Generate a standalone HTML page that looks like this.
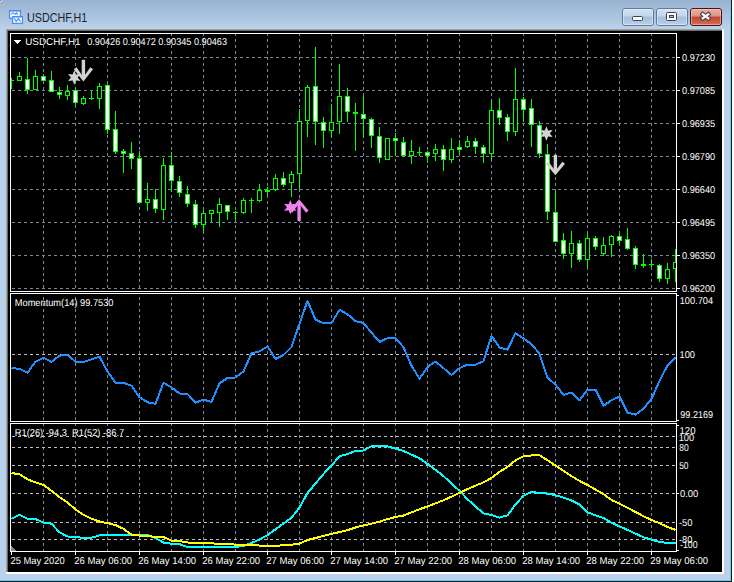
<!DOCTYPE html>
<html><head><meta charset="utf-8">
<style>
html,body{margin:0;padding:0;background:#fff;}
#win{position:absolute;left:0;top:0;width:732px;height:582px;overflow:hidden;
 background:linear-gradient(to bottom,#97b2d0 0px,#a8c1dc 14px,#b9d1ea 28px,#b9d1ea 100%);}
.edge{position:absolute;}
#title{position:absolute;left:26.5px;top:11px;font:12.5px "Liberation Sans",sans-serif;color:#1c1c30;transform:scaleX(0.86);transform-origin:0 0;white-space:nowrap}
.btn{position:absolute;top:8px;height:16px;border:1px solid #6a84a4;border-radius:3px;box-sizing:content-box;
 background:linear-gradient(to bottom,#dbe7f4 0,#c9daee 50%,#a9c1dc 52%,#b9cfe6 100%);}
#bclose{border-color:#5a1e1e;background:linear-gradient(to bottom,#eaa999 0,#dd8c78 50%,#c2462a 52%,#cf6a48 100%);}
</style></head><body>
<div id="win">
 <div class="edge" style="left:0;top:0;width:1px;height:1px;background:#6e6e6e"></div>
 <div class="edge" style="left:1px;top:0;width:1px;height:1px;background:#ececec"></div>
 <div class="edge" style="left:0;top:1px;width:1px;height:1px;background:#ececec"></div>
 <div class="edge" style="left:730px;top:0;width:1px;height:581px;background:#5ad2f5"></div>
 <div class="edge" style="left:731px;top:0;width:1px;height:582px;background:#1a1a1a"></div>
 <div class="edge" style="left:0;top:580px;width:731px;height:1px;background:#5ad2f5"></div>
 <div class="edge" style="left:0;top:581px;width:732px;height:1px;background:#1a1a1a"></div>
 <svg width="16" height="16" viewBox="0 0 16 16" style="position:absolute;left:8px;top:9px"><rect x="1.6" y="1.6" width="10.8" height="7.8" fill="#fff" stroke="#4a8cf0" stroke-width="1.3"/><rect x="1" y="1" width="12" height="1.4" fill="#4a8cf0"/><path d="M3.2 5.4 L5 3.6 L7.2 5.2 L8.6 3.8 L9.6 6" fill="none" stroke="#4a8cf0" stroke-width="1.1"/><rect x="4.6" y="7.6" width="9.8" height="6.8" fill="#fff" stroke="#4a8cf0" stroke-width="1.3"/><rect x="4" y="7" width="11" height="1.4" fill="#4a8cf0"/><path d="M6.2 9.4 L8.3 12.6 L10.4 9.4 L12.4 12.6" fill="none" stroke="#4a8cf0" stroke-width="1.1"/></svg>
 <div id="title">USDCHF,H1</div>
 <svg width="104" height="22" style="position:absolute;left:620px;top:6px" viewBox="0 0 104 22">
  <defs>
   <linearGradient id="gb" x1="0" y1="0" x2="0" y2="1"><stop offset="0" stop-color="#d5e3f2"/><stop offset="0.45" stop-color="#c2d5eb"/><stop offset="0.5" stop-color="#a5bedb"/><stop offset="1" stop-color="#bcd0e8"/></linearGradient>
   <linearGradient id="gr" x1="0" y1="0" x2="0" y2="1"><stop offset="0" stop-color="#eeb0a2"/><stop offset="0.45" stop-color="#de9482"/><stop offset="0.5" stop-color="#c0442a"/><stop offset="1" stop-color="#d4735a"/></linearGradient>
  </defs>
  <rect x="2.5" y="2.5" width="31" height="17" rx="2.5" fill="url(#gb)" stroke="#5f7a99"/>
  <rect x="3.5" y="3.5" width="29" height="15" rx="1.5" fill="none" stroke="#e8f0f9" stroke-opacity="0.6"/>
  <rect x="12.5" y="10.5" width="10" height="4" rx="1" fill="#fafafa" stroke="#3d4352"/>
  <rect x="36.5" y="2.5" width="31" height="17" rx="2.5" fill="url(#gb)" stroke="#5f7a99"/>
  <rect x="37.5" y="3.5" width="29" height="15" rx="1.5" fill="none" stroke="#e8f0f9" stroke-opacity="0.6"/>
  <rect x="46.5" y="6.5" width="10" height="8" rx="1" fill="#fafafa" stroke="#3d4352"/>
  <rect x="49.5" y="9.5" width="4" height="2" fill="#a8bede" stroke="#3d4352"/>
  <rect x="70.5" y="2.5" width="31" height="17" rx="2.5" fill="url(#gr)" stroke="#4a1414"/>
  <rect x="71.5" y="3.5" width="29" height="15" rx="1.5" fill="none" stroke="#f6d0c6" stroke-opacity="0.5"/>
  <path d="M82.7 8.3 L88.3 12.3 M88.3 8.3 L82.7 12.3" stroke="#3a3c48" stroke-width="4.3" stroke-linecap="square"/>
  <path d="M82.7 8.3 L88.3 12.3 M88.3 8.3 L82.7 12.3" stroke="#fafafa" stroke-width="2.3" stroke-linecap="square"/>
 </svg>
 <div class="edge" style="left:6px;top:29px;width:718px;height:1px;background:#a0a0a0"></div>
 <div class="edge" style="left:6px;top:29px;width:1px;height:545px;background:#a0a0a0"></div>
 <div class="edge" style="left:7px;top:30px;width:716px;height:1px;background:#696969"></div>
 <div class="edge" style="left:7px;top:30px;width:1px;height:543px;background:#696969"></div>
 <div class="edge" style="left:722px;top:29px;width:2px;height:545px;background:#fff"></div>
 <div class="edge" style="left:6px;top:572px;width:718px;height:2px;background:#fff"></div>
 <div class="edge" style="left:8px;top:31px;width:714px;height:541px;background:#000"></div>
</div>
<svg width="734" height="582" viewBox="0 0 734 582" style="position:absolute;left:0;top:0" shape-rendering="crispEdges"><defs><clipPath id="cm"><rect x="11" y="34" width="665" height="257"/></clipPath><clipPath id="cmo"><rect x="11" y="294" width="665" height="127"/></clipPath><clipPath id="crs"><rect x="11" y="424" width="665" height="127"/></clipPath></defs><line x1="43.5" y1="34" x2="43.5" y2="291" stroke="#778899" stroke-dasharray="3 3" stroke-dashoffset="1"/><line x1="75.5" y1="34" x2="75.5" y2="291" stroke="#778899" stroke-dasharray="3 3" stroke-dashoffset="1"/><line x1="107.5" y1="34" x2="107.5" y2="291" stroke="#778899" stroke-dasharray="3 3" stroke-dashoffset="1"/><line x1="139.5" y1="34" x2="139.5" y2="291" stroke="#778899" stroke-dasharray="3 3" stroke-dashoffset="1"/><line x1="171.5" y1="34" x2="171.5" y2="291" stroke="#778899" stroke-dasharray="3 3" stroke-dashoffset="1"/><line x1="203.5" y1="34" x2="203.5" y2="291" stroke="#778899" stroke-dasharray="3 3" stroke-dashoffset="1"/><line x1="235.5" y1="34" x2="235.5" y2="291" stroke="#778899" stroke-dasharray="3 3" stroke-dashoffset="1"/><line x1="267.5" y1="34" x2="267.5" y2="291" stroke="#778899" stroke-dasharray="3 3" stroke-dashoffset="1"/><line x1="299.5" y1="34" x2="299.5" y2="291" stroke="#778899" stroke-dasharray="3 3" stroke-dashoffset="1"/><line x1="331.5" y1="34" x2="331.5" y2="291" stroke="#778899" stroke-dasharray="3 3" stroke-dashoffset="1"/><line x1="363.5" y1="34" x2="363.5" y2="291" stroke="#778899" stroke-dasharray="3 3" stroke-dashoffset="1"/><line x1="395.5" y1="34" x2="395.5" y2="291" stroke="#778899" stroke-dasharray="3 3" stroke-dashoffset="1"/><line x1="427.5" y1="34" x2="427.5" y2="291" stroke="#778899" stroke-dasharray="3 3" stroke-dashoffset="1"/><line x1="459.5" y1="34" x2="459.5" y2="291" stroke="#778899" stroke-dasharray="3 3" stroke-dashoffset="1"/><line x1="491.5" y1="34" x2="491.5" y2="291" stroke="#778899" stroke-dasharray="3 3" stroke-dashoffset="1"/><line x1="523.5" y1="34" x2="523.5" y2="291" stroke="#778899" stroke-dasharray="3 3" stroke-dashoffset="1"/><line x1="555.5" y1="34" x2="555.5" y2="291" stroke="#778899" stroke-dasharray="3 3" stroke-dashoffset="1"/><line x1="587.5" y1="34" x2="587.5" y2="291" stroke="#778899" stroke-dasharray="3 3" stroke-dashoffset="1"/><line x1="619.5" y1="34" x2="619.5" y2="291" stroke="#778899" stroke-dasharray="3 3" stroke-dashoffset="1"/><line x1="651.5" y1="34" x2="651.5" y2="291" stroke="#778899" stroke-dasharray="3 3" stroke-dashoffset="1"/><line x1="43.5" y1="294" x2="43.5" y2="421" stroke="#778899" stroke-dasharray="3 3" stroke-dashoffset="3"/><line x1="75.5" y1="294" x2="75.5" y2="421" stroke="#778899" stroke-dasharray="3 3" stroke-dashoffset="3"/><line x1="107.5" y1="294" x2="107.5" y2="421" stroke="#778899" stroke-dasharray="3 3" stroke-dashoffset="3"/><line x1="139.5" y1="294" x2="139.5" y2="421" stroke="#778899" stroke-dasharray="3 3" stroke-dashoffset="3"/><line x1="171.5" y1="294" x2="171.5" y2="421" stroke="#778899" stroke-dasharray="3 3" stroke-dashoffset="3"/><line x1="203.5" y1="294" x2="203.5" y2="421" stroke="#778899" stroke-dasharray="3 3" stroke-dashoffset="3"/><line x1="235.5" y1="294" x2="235.5" y2="421" stroke="#778899" stroke-dasharray="3 3" stroke-dashoffset="3"/><line x1="267.5" y1="294" x2="267.5" y2="421" stroke="#778899" stroke-dasharray="3 3" stroke-dashoffset="3"/><line x1="299.5" y1="294" x2="299.5" y2="421" stroke="#778899" stroke-dasharray="3 3" stroke-dashoffset="3"/><line x1="331.5" y1="294" x2="331.5" y2="421" stroke="#778899" stroke-dasharray="3 3" stroke-dashoffset="3"/><line x1="363.5" y1="294" x2="363.5" y2="421" stroke="#778899" stroke-dasharray="3 3" stroke-dashoffset="3"/><line x1="395.5" y1="294" x2="395.5" y2="421" stroke="#778899" stroke-dasharray="3 3" stroke-dashoffset="3"/><line x1="427.5" y1="294" x2="427.5" y2="421" stroke="#778899" stroke-dasharray="3 3" stroke-dashoffset="3"/><line x1="459.5" y1="294" x2="459.5" y2="421" stroke="#778899" stroke-dasharray="3 3" stroke-dashoffset="3"/><line x1="491.5" y1="294" x2="491.5" y2="421" stroke="#778899" stroke-dasharray="3 3" stroke-dashoffset="3"/><line x1="523.5" y1="294" x2="523.5" y2="421" stroke="#778899" stroke-dasharray="3 3" stroke-dashoffset="3"/><line x1="555.5" y1="294" x2="555.5" y2="421" stroke="#778899" stroke-dasharray="3 3" stroke-dashoffset="3"/><line x1="587.5" y1="294" x2="587.5" y2="421" stroke="#778899" stroke-dasharray="3 3" stroke-dashoffset="3"/><line x1="619.5" y1="294" x2="619.5" y2="421" stroke="#778899" stroke-dasharray="3 3" stroke-dashoffset="3"/><line x1="651.5" y1="294" x2="651.5" y2="421" stroke="#778899" stroke-dasharray="3 3" stroke-dashoffset="3"/><line x1="43.5" y1="424" x2="43.5" y2="551" stroke="#778899" stroke-dasharray="3 3" stroke-dashoffset="1"/><line x1="75.5" y1="424" x2="75.5" y2="551" stroke="#778899" stroke-dasharray="3 3" stroke-dashoffset="1"/><line x1="107.5" y1="424" x2="107.5" y2="551" stroke="#778899" stroke-dasharray="3 3" stroke-dashoffset="1"/><line x1="139.5" y1="424" x2="139.5" y2="551" stroke="#778899" stroke-dasharray="3 3" stroke-dashoffset="1"/><line x1="171.5" y1="424" x2="171.5" y2="551" stroke="#778899" stroke-dasharray="3 3" stroke-dashoffset="1"/><line x1="203.5" y1="424" x2="203.5" y2="551" stroke="#778899" stroke-dasharray="3 3" stroke-dashoffset="1"/><line x1="235.5" y1="424" x2="235.5" y2="551" stroke="#778899" stroke-dasharray="3 3" stroke-dashoffset="1"/><line x1="267.5" y1="424" x2="267.5" y2="551" stroke="#778899" stroke-dasharray="3 3" stroke-dashoffset="1"/><line x1="299.5" y1="424" x2="299.5" y2="551" stroke="#778899" stroke-dasharray="3 3" stroke-dashoffset="1"/><line x1="331.5" y1="424" x2="331.5" y2="551" stroke="#778899" stroke-dasharray="3 3" stroke-dashoffset="1"/><line x1="363.5" y1="424" x2="363.5" y2="551" stroke="#778899" stroke-dasharray="3 3" stroke-dashoffset="1"/><line x1="395.5" y1="424" x2="395.5" y2="551" stroke="#778899" stroke-dasharray="3 3" stroke-dashoffset="1"/><line x1="427.5" y1="424" x2="427.5" y2="551" stroke="#778899" stroke-dasharray="3 3" stroke-dashoffset="1"/><line x1="459.5" y1="424" x2="459.5" y2="551" stroke="#778899" stroke-dasharray="3 3" stroke-dashoffset="1"/><line x1="491.5" y1="424" x2="491.5" y2="551" stroke="#778899" stroke-dasharray="3 3" stroke-dashoffset="1"/><line x1="523.5" y1="424" x2="523.5" y2="551" stroke="#778899" stroke-dasharray="3 3" stroke-dashoffset="1"/><line x1="555.5" y1="424" x2="555.5" y2="551" stroke="#778899" stroke-dasharray="3 3" stroke-dashoffset="1"/><line x1="587.5" y1="424" x2="587.5" y2="551" stroke="#778899" stroke-dasharray="3 3" stroke-dashoffset="1"/><line x1="619.5" y1="424" x2="619.5" y2="551" stroke="#778899" stroke-dasharray="3 3" stroke-dashoffset="1"/><line x1="651.5" y1="424" x2="651.5" y2="551" stroke="#778899" stroke-dasharray="3 3" stroke-dashoffset="1"/><line x1="12" y1="57.5" x2="676" y2="57.5" stroke="#778899" stroke-dasharray="3 3"/><line x1="12" y1="90.5" x2="676" y2="90.5" stroke="#778899" stroke-dasharray="3 3"/><line x1="12" y1="123.5" x2="676" y2="123.5" stroke="#778899" stroke-dasharray="3 3"/><line x1="12" y1="156.5" x2="676" y2="156.5" stroke="#778899" stroke-dasharray="3 3"/><line x1="12" y1="189.5" x2="676" y2="189.5" stroke="#778899" stroke-dasharray="3 3"/><line x1="12" y1="222.5" x2="676" y2="222.5" stroke="#778899" stroke-dasharray="3 3"/><line x1="12" y1="255.5" x2="676" y2="255.5" stroke="#778899" stroke-dasharray="3 3"/><line x1="12" y1="288.5" x2="676" y2="288.5" stroke="#778899" stroke-dasharray="3 3"/><line x1="12" y1="354.5" x2="676" y2="354.5" stroke="#c0c0c0" stroke-dasharray="3 3"/><line x1="12" y1="436.5" x2="676" y2="436.5" stroke="#c0c0c0" stroke-dasharray="3 3"/><line x1="12" y1="447.5" x2="676" y2="447.5" stroke="#c0c0c0" stroke-dasharray="3 3"/><line x1="12" y1="465.5" x2="676" y2="465.5" stroke="#c0c0c0" stroke-dasharray="3 3"/><line x1="12" y1="493.5" x2="676" y2="493.5" stroke="#c0c0c0" stroke-dasharray="3 3"/><line x1="12" y1="522.5" x2="676" y2="522.5" stroke="#c0c0c0" stroke-dasharray="3 3"/><line x1="12" y1="539.5" x2="676" y2="539.5" stroke="#c0c0c0" stroke-dasharray="3 3"/><g clip-path="url(#cm)"><rect x="11" y="78" width="1" height="11" fill="#00ff00"/><rect x="9" y="80" width="5" height="1" fill="#00ff00"/><rect x="19" y="72" width="1" height="9" fill="#00ff00"/><rect x="17" y="76" width="5" height="5" fill="#00ff00"/><rect x="18" y="77" width="3" height="3" fill="#000"/><rect x="27" y="58" width="1" height="36" fill="#00ff00"/><rect x="25" y="79" width="5" height="11" fill="#00ff00"/><rect x="26" y="80" width="3" height="9" fill="#fff"/><rect x="35" y="70" width="1" height="20" fill="#00ff00"/><rect x="33" y="76" width="5" height="14" fill="#00ff00"/><rect x="34" y="77" width="3" height="12" fill="#000"/><rect x="43" y="74" width="1" height="7" fill="#00ff00"/><rect x="41" y="76" width="5" height="5" fill="#00ff00"/><rect x="42" y="77" width="3" height="3" fill="#fff"/><rect x="51" y="71" width="1" height="21" fill="#00ff00"/><rect x="49" y="80" width="5" height="12" fill="#00ff00"/><rect x="50" y="81" width="3" height="10" fill="#fff"/><rect x="59" y="87" width="1" height="12" fill="#00ff00"/><rect x="57" y="92" width="5" height="3" fill="#00ff00"/><rect x="58" y="93" width="3" height="1" fill="#fff"/><rect x="67" y="85" width="1" height="15" fill="#00ff00"/><rect x="65" y="91" width="5" height="5" fill="#00ff00"/><rect x="66" y="92" width="3" height="3" fill="#000"/><rect x="75" y="88" width="1" height="17" fill="#00ff00"/><rect x="73" y="90" width="5" height="13" fill="#00ff00"/><rect x="74" y="91" width="3" height="11" fill="#fff"/><rect x="83" y="96" width="1" height="9" fill="#00ff00"/><rect x="81" y="98" width="5" height="6" fill="#00ff00"/><rect x="82" y="99" width="3" height="4" fill="#000"/><rect x="91" y="91" width="1" height="9" fill="#00ff00"/><rect x="89" y="98" width="5" height="1" fill="#00ff00"/><rect x="99" y="83" width="1" height="26" fill="#00ff00"/><rect x="97" y="86" width="5" height="13" fill="#00ff00"/><rect x="98" y="87" width="3" height="11" fill="#000"/><rect x="107" y="84" width="1" height="50" fill="#00ff00"/><rect x="105" y="85" width="5" height="45" fill="#00ff00"/><rect x="106" y="86" width="3" height="43" fill="#fff"/><rect x="115" y="111" width="1" height="43" fill="#00ff00"/><rect x="113" y="129" width="5" height="23" fill="#00ff00"/><rect x="114" y="130" width="3" height="21" fill="#fff"/><rect x="123" y="149" width="1" height="24" fill="#00ff00"/><rect x="121" y="151" width="5" height="3" fill="#00ff00"/><rect x="122" y="152" width="3" height="1" fill="#fff"/><rect x="131" y="142" width="1" height="27" fill="#00ff00"/><rect x="129" y="153" width="5" height="6" fill="#00ff00"/><rect x="130" y="154" width="3" height="4" fill="#fff"/><rect x="139" y="151" width="1" height="52" fill="#00ff00"/><rect x="137" y="158" width="5" height="45" fill="#00ff00"/><rect x="138" y="159" width="3" height="43" fill="#fff"/><rect x="147" y="183" width="1" height="28" fill="#00ff00"/><rect x="145" y="199" width="5" height="4" fill="#00ff00"/><rect x="146" y="200" width="3" height="2" fill="#000"/><rect x="155" y="189" width="1" height="24" fill="#00ff00"/><rect x="153" y="199" width="5" height="10" fill="#00ff00"/><rect x="154" y="200" width="3" height="8" fill="#fff"/><rect x="163" y="158" width="1" height="62" fill="#00ff00"/><rect x="161" y="165" width="5" height="45" fill="#00ff00"/><rect x="162" y="166" width="3" height="43" fill="#000"/><rect x="171" y="152" width="1" height="40" fill="#00ff00"/><rect x="169" y="165" width="5" height="16" fill="#00ff00"/><rect x="170" y="166" width="3" height="14" fill="#fff"/><rect x="179" y="176" width="1" height="21" fill="#00ff00"/><rect x="177" y="181" width="5" height="12" fill="#00ff00"/><rect x="178" y="182" width="3" height="10" fill="#fff"/><rect x="187" y="186" width="1" height="21" fill="#00ff00"/><rect x="185" y="194" width="5" height="10" fill="#00ff00"/><rect x="186" y="195" width="3" height="8" fill="#fff"/><rect x="195" y="200" width="1" height="28" fill="#00ff00"/><rect x="193" y="204" width="5" height="21" fill="#00ff00"/><rect x="194" y="205" width="3" height="19" fill="#fff"/><rect x="203" y="210" width="1" height="22" fill="#00ff00"/><rect x="201" y="213" width="5" height="12" fill="#00ff00"/><rect x="202" y="214" width="3" height="10" fill="#000"/><rect x="211" y="210" width="1" height="12" fill="#00ff00"/><rect x="209" y="210" width="5" height="4" fill="#00ff00"/><rect x="210" y="211" width="3" height="2" fill="#000"/><rect x="219" y="198" width="1" height="29" fill="#00ff00"/><rect x="217" y="204" width="5" height="9" fill="#00ff00"/><rect x="218" y="205" width="3" height="7" fill="#000"/><rect x="227" y="205" width="1" height="15" fill="#00ff00"/><rect x="225" y="205" width="5" height="7" fill="#00ff00"/><rect x="226" y="206" width="3" height="5" fill="#fff"/><rect x="235" y="211" width="1" height="9" fill="#00ff00"/><rect x="233" y="212" width="5" height="1" fill="#00ff00"/><rect x="243" y="198" width="1" height="16" fill="#00ff00"/><rect x="241" y="200" width="5" height="13" fill="#00ff00"/><rect x="242" y="201" width="3" height="11" fill="#000"/><rect x="251" y="198" width="1" height="15" fill="#00ff00"/><rect x="249" y="200" width="5" height="1" fill="#00ff00"/><rect x="259" y="184" width="1" height="18" fill="#00ff00"/><rect x="257" y="190" width="5" height="11" fill="#00ff00"/><rect x="258" y="191" width="3" height="9" fill="#000"/><rect x="267" y="187" width="1" height="8" fill="#00ff00"/><rect x="265" y="190" width="5" height="2" fill="#00ff00"/><rect x="275" y="174" width="1" height="17" fill="#00ff00"/><rect x="273" y="178" width="5" height="12" fill="#00ff00"/><rect x="274" y="179" width="3" height="10" fill="#000"/><rect x="283" y="172" width="1" height="15" fill="#00ff00"/><rect x="281" y="178" width="5" height="7" fill="#00ff00"/><rect x="282" y="179" width="3" height="5" fill="#fff"/><rect x="291" y="171" width="1" height="26" fill="#00ff00"/><rect x="289" y="174" width="5" height="9" fill="#00ff00"/><rect x="290" y="175" width="3" height="7" fill="#000"/><rect x="299" y="109" width="1" height="80" fill="#00ff00"/><rect x="297" y="121" width="5" height="53" fill="#00ff00"/><rect x="298" y="122" width="3" height="51" fill="#000"/><rect x="307" y="85" width="1" height="52" fill="#00ff00"/><rect x="305" y="87" width="5" height="34" fill="#00ff00"/><rect x="306" y="88" width="3" height="32" fill="#000"/><rect x="315" y="47" width="1" height="98" fill="#00ff00"/><rect x="313" y="86" width="5" height="36" fill="#00ff00"/><rect x="314" y="87" width="3" height="34" fill="#fff"/><rect x="323" y="117" width="1" height="31" fill="#00ff00"/><rect x="321" y="122" width="5" height="9" fill="#00ff00"/><rect x="322" y="123" width="3" height="7" fill="#fff"/><rect x="331" y="104" width="1" height="33" fill="#00ff00"/><rect x="329" y="122" width="5" height="9" fill="#00ff00"/><rect x="330" y="123" width="3" height="7" fill="#000"/><rect x="339" y="64" width="1" height="70" fill="#00ff00"/><rect x="337" y="96" width="5" height="26" fill="#00ff00"/><rect x="338" y="97" width="3" height="24" fill="#000"/><rect x="347" y="88" width="1" height="34" fill="#00ff00"/><rect x="345" y="96" width="5" height="16" fill="#00ff00"/><rect x="346" y="97" width="3" height="14" fill="#fff"/><rect x="355" y="103" width="1" height="48" fill="#00ff00"/><rect x="353" y="112" width="5" height="2" fill="#00ff00"/><rect x="363" y="96" width="1" height="42" fill="#00ff00"/><rect x="361" y="114" width="5" height="5" fill="#00ff00"/><rect x="362" y="115" width="3" height="3" fill="#fff"/><rect x="371" y="118" width="1" height="30" fill="#00ff00"/><rect x="369" y="119" width="5" height="17" fill="#00ff00"/><rect x="370" y="120" width="3" height="15" fill="#fff"/><rect x="379" y="127" width="1" height="36" fill="#00ff00"/><rect x="377" y="136" width="5" height="22" fill="#00ff00"/><rect x="378" y="137" width="3" height="20" fill="#fff"/><rect x="387" y="138" width="1" height="22" fill="#00ff00"/><rect x="385" y="138" width="5" height="22" fill="#00ff00"/><rect x="386" y="139" width="3" height="20" fill="#000"/><rect x="395" y="133" width="1" height="23" fill="#00ff00"/><rect x="393" y="138" width="5" height="3" fill="#00ff00"/><rect x="394" y="139" width="3" height="1" fill="#fff"/><rect x="403" y="137" width="1" height="20" fill="#00ff00"/><rect x="401" y="142" width="5" height="14" fill="#00ff00"/><rect x="402" y="143" width="3" height="12" fill="#fff"/><rect x="411" y="140" width="1" height="24" fill="#00ff00"/><rect x="409" y="151" width="5" height="5" fill="#00ff00"/><rect x="410" y="152" width="3" height="3" fill="#000"/><rect x="419" y="147" width="1" height="9" fill="#00ff00"/><rect x="417" y="152" width="5" height="1" fill="#00ff00"/><rect x="427" y="151" width="1" height="12" fill="#00ff00"/><rect x="425" y="152" width="5" height="4" fill="#00ff00"/><rect x="426" y="153" width="3" height="2" fill="#fff"/><rect x="435" y="144" width="1" height="17" fill="#00ff00"/><rect x="433" y="149" width="5" height="5" fill="#00ff00"/><rect x="434" y="150" width="3" height="3" fill="#000"/><rect x="443" y="145" width="1" height="26" fill="#00ff00"/><rect x="441" y="149" width="5" height="11" fill="#00ff00"/><rect x="442" y="150" width="3" height="9" fill="#fff"/><rect x="451" y="138" width="1" height="25" fill="#00ff00"/><rect x="449" y="149" width="5" height="11" fill="#00ff00"/><rect x="450" y="150" width="3" height="9" fill="#000"/><rect x="459" y="140" width="1" height="14" fill="#00ff00"/><rect x="457" y="147" width="5" height="3" fill="#00ff00"/><rect x="458" y="148" width="3" height="1" fill="#fff"/><rect x="467" y="136" width="1" height="12" fill="#00ff00"/><rect x="465" y="141" width="5" height="6" fill="#00ff00"/><rect x="466" y="142" width="3" height="4" fill="#000"/><rect x="475" y="138" width="1" height="16" fill="#00ff00"/><rect x="473" y="141" width="5" height="6" fill="#00ff00"/><rect x="474" y="142" width="3" height="4" fill="#fff"/><rect x="483" y="145" width="1" height="18" fill="#00ff00"/><rect x="481" y="147" width="5" height="7" fill="#00ff00"/><rect x="482" y="148" width="3" height="5" fill="#fff"/><rect x="491" y="100" width="1" height="59" fill="#00ff00"/><rect x="489" y="110" width="5" height="44" fill="#00ff00"/><rect x="490" y="111" width="3" height="42" fill="#000"/><rect x="499" y="98" width="1" height="27" fill="#00ff00"/><rect x="497" y="110" width="5" height="8" fill="#00ff00"/><rect x="498" y="111" width="3" height="6" fill="#fff"/><rect x="507" y="114" width="1" height="27" fill="#00ff00"/><rect x="505" y="117" width="5" height="15" fill="#00ff00"/><rect x="506" y="118" width="3" height="13" fill="#fff"/><rect x="515" y="68" width="1" height="68" fill="#00ff00"/><rect x="513" y="99" width="5" height="33" fill="#00ff00"/><rect x="514" y="100" width="3" height="31" fill="#000"/><rect x="523" y="97" width="1" height="25" fill="#00ff00"/><rect x="521" y="99" width="5" height="11" fill="#00ff00"/><rect x="522" y="100" width="3" height="9" fill="#fff"/><rect x="531" y="99" width="1" height="48" fill="#00ff00"/><rect x="529" y="108" width="5" height="17" fill="#00ff00"/><rect x="530" y="109" width="3" height="15" fill="#fff"/><rect x="539" y="121" width="1" height="37" fill="#00ff00"/><rect x="537" y="125" width="5" height="29" fill="#00ff00"/><rect x="538" y="126" width="3" height="27" fill="#fff"/><rect x="547" y="144" width="1" height="76" fill="#00ff00"/><rect x="545" y="154" width="5" height="58" fill="#00ff00"/><rect x="546" y="155" width="3" height="56" fill="#fff"/><rect x="555" y="190" width="1" height="52" fill="#00ff00"/><rect x="553" y="212" width="5" height="30" fill="#00ff00"/><rect x="554" y="213" width="3" height="28" fill="#fff"/><rect x="563" y="233" width="1" height="26" fill="#00ff00"/><rect x="561" y="240" width="5" height="14" fill="#00ff00"/><rect x="562" y="241" width="3" height="12" fill="#fff"/><rect x="571" y="231" width="1" height="37" fill="#00ff00"/><rect x="569" y="243" width="5" height="11" fill="#00ff00"/><rect x="570" y="244" width="3" height="9" fill="#000"/><rect x="579" y="240" width="1" height="22" fill="#00ff00"/><rect x="577" y="243" width="5" height="17" fill="#00ff00"/><rect x="578" y="244" width="3" height="15" fill="#fff"/><rect x="587" y="233" width="1" height="34" fill="#00ff00"/><rect x="585" y="238" width="5" height="22" fill="#00ff00"/><rect x="586" y="239" width="3" height="20" fill="#000"/><rect x="595" y="236" width="1" height="14" fill="#00ff00"/><rect x="593" y="238" width="5" height="9" fill="#00ff00"/><rect x="594" y="239" width="3" height="7" fill="#fff"/><rect x="603" y="237" width="1" height="19" fill="#00ff00"/><rect x="601" y="245" width="5" height="9" fill="#00ff00"/><rect x="602" y="246" width="3" height="7" fill="#000"/><rect x="611" y="235" width="1" height="22" fill="#00ff00"/><rect x="609" y="236" width="5" height="9" fill="#00ff00"/><rect x="610" y="237" width="3" height="7" fill="#000"/><rect x="619" y="233" width="1" height="11" fill="#00ff00"/><rect x="617" y="236" width="5" height="5" fill="#00ff00"/><rect x="618" y="237" width="3" height="3" fill="#fff"/><rect x="627" y="228" width="1" height="22" fill="#00ff00"/><rect x="625" y="239" width="5" height="10" fill="#00ff00"/><rect x="626" y="240" width="3" height="8" fill="#fff"/><rect x="635" y="246" width="1" height="23" fill="#00ff00"/><rect x="633" y="248" width="5" height="17" fill="#00ff00"/><rect x="634" y="249" width="3" height="15" fill="#fff"/><rect x="643" y="254" width="1" height="14" fill="#00ff00"/><rect x="641" y="264" width="5" height="2" fill="#00ff00"/><rect x="651" y="259" width="1" height="8" fill="#00ff00"/><rect x="649" y="264" width="5" height="1" fill="#00ff00"/><rect x="659" y="264" width="1" height="18" fill="#00ff00"/><rect x="657" y="265" width="5" height="14" fill="#00ff00"/><rect x="658" y="266" width="3" height="12" fill="#fff"/><rect x="667" y="263" width="1" height="21" fill="#00ff00"/><rect x="665" y="269" width="5" height="10" fill="#00ff00"/><rect x="666" y="270" width="3" height="8" fill="#000"/><rect x="675" y="249" width="1" height="33" fill="#00ff00"/><rect x="673" y="262" width="5" height="7" fill="#00ff00"/><rect x="674" y="263" width="3" height="5" fill="#000"/></g><g clip-path="url(#cmo)"><polyline points="11.5,368.0 19.5,368.9 27.5,372.7 35.5,361.7 43.5,357.8 51.5,361.9 59.5,355.6 67.5,355.0 75.5,361.7 83.5,361.9 91.5,359.3 99.5,356.6 107.5,371.5 115.5,382.7 123.5,382.7 131.5,385.7 139.5,397.2 147.5,402.3 155.5,403.8 163.5,382.7 171.5,387.5 179.5,393.5 187.5,393.9 195.5,402.6 203.5,399.6 211.5,402.0 219.5,383.3 227.5,378.0 235.5,377.5 243.5,371.5 251.5,353.4 259.5,351.4 267.5,346.5 275.5,358.9 283.5,355.1 291.5,347.0 299.5,323.7 307.5,300.8 315.5,319.7 323.5,323.2 331.5,323.2 339.5,309.8 347.5,314.2 355.5,321.1 363.5,323.0 371.5,332.7 379.5,341.9 387.5,338.2 395.5,338.2 403.5,347.1 411.5,365.7 419.5,378.7 427.5,367.0 435.5,361.6 443.5,368.1 451.5,375.0 459.5,368.1 467.5,364.7 475.5,364.7 483.5,361.2 491.5,335.8 499.5,347.5 507.5,349.6 515.5,333.1 523.5,338.6 531.5,344.0 539.5,353.7 547.5,377.7 555.5,384.6 563.5,394.9 571.5,392.6 579.5,400.4 587.5,389.5 595.5,389.5 603.5,405.7 611.5,400.3 619.5,396.5 627.5,412.7 635.5,414.7 643.5,408.8 651.5,398.8 659.5,381.0 667.5,365.5 675.5,357.5" fill="none" stroke="#1e90ff" stroke-width="2" stroke-linejoin="round"/></g><g clip-path="url(#crs)"><polyline points="11.5,518.7 19.5,514.9 27.5,518.7 35.5,519.0 43.5,522.6 51.5,523.7 59.5,532.3 67.5,536.5 75.5,537.3 83.5,537.7 91.5,537.7 99.5,535.4 107.5,534.7 115.5,534.7 123.5,534.7 131.5,534.7 139.5,534.7 147.5,535.0 155.5,538.0 163.5,542.5 171.5,543.8 179.5,544.2 187.5,547.0 195.5,547.0 203.5,547.0 211.5,547.0 219.5,547.0 227.5,547.0 235.5,547.0 243.5,546.0 251.5,542.9 259.5,539.5 267.5,535.1 275.5,529.3 283.5,523.5 291.5,517.7 299.5,507.6 307.5,492.9 315.5,483.5 323.5,474.0 331.5,465.6 339.5,456.2 347.5,454.1 355.5,451.0 363.5,450.5 371.5,446.1 379.5,445.7 387.5,446.4 395.5,448.6 403.5,451.0 411.5,454.7 419.5,458.3 427.5,464.0 435.5,469.8 443.5,476.1 451.5,483.5 459.5,490.8 467.5,499.2 475.5,506.5 483.5,513.4 491.5,514.9 499.5,517.6 507.5,515.3 515.5,504.4 523.5,495.8 531.5,491.9 539.5,492.9 547.5,493.6 555.5,495.3 563.5,497.6 571.5,500.5 579.5,504.4 587.5,512.2 595.5,515.4 603.5,517.9 611.5,522.8 619.5,526.3 627.5,529.9 635.5,533.7 643.5,537.3 651.5,539.7 659.5,541.8 667.5,543.0 675.5,543.0" fill="none" stroke="#00ffff" stroke-width="2" stroke-linejoin="round"/><polyline points="11.5,473.1 19.5,474.2 27.5,479.3 35.5,482.4 43.5,485.0 51.5,490.9 59.5,497.1 67.5,502.5 75.5,509.5 83.5,514.9 91.5,518.7 99.5,521.5 107.5,523.2 115.5,525.1 123.5,528.8 131.5,534.7 139.5,535.6 147.5,536.0 155.5,537.0 163.5,537.0 171.5,540.7 179.5,541.1 187.5,542.5 195.5,542.7 203.5,542.9 211.5,543.3 219.5,543.9 227.5,543.9 235.5,544.7 243.5,544.7 251.5,544.7 259.5,545.6 267.5,546.0 275.5,546.0 283.5,545.2 291.5,544.7 299.5,543.6 307.5,540.0 315.5,538.0 323.5,535.9 331.5,533.8 339.5,532.1 347.5,530.2 355.5,527.5 363.5,525.4 371.5,523.7 379.5,521.6 387.5,519.1 395.5,517.0 403.5,515.5 411.5,512.4 419.5,509.2 427.5,506.5 435.5,503.4 443.5,500.2 451.5,496.7 459.5,492.9 467.5,489.1 475.5,485.6 483.5,482.4 491.5,477.8 499.5,471.9 507.5,467.0 515.5,460.3 523.5,456.3 531.5,455.5 539.5,455.1 547.5,460.3 555.5,465.4 563.5,470.9 571.5,476.1 579.5,480.9 587.5,485.0 595.5,489.5 603.5,494.2 611.5,499.9 619.5,503.8 627.5,507.7 635.5,512.0 643.5,516.2 651.5,520.0 659.5,523.2 667.5,527.0 675.5,529.9" fill="none" stroke="#ffff00" stroke-width="2" stroke-linejoin="round"/></g><polygon points="74.30,70.30 76.00,74.56 80.54,73.90 77.70,77.50 80.54,81.10 76.00,80.44 74.30,84.70 72.60,80.44 68.06,81.10 70.90,77.50 68.06,73.90 72.60,74.56" fill="#d3d3d3" shape-rendering="geometricPrecision"/><g shape-rendering="geometricPrecision" fill="#d3d3d3"><rect x="81.7" y="59.8" width="3.4" height="18.60000000000001"/><polygon points="73.80000000000001,69.2 76.52000000000001,67.16 83.4,77.32000000000001 90.28,67.16 93.0,69.2 83.4,81.4"/></g><polygon points="290.30,200.10 292.00,204.36 296.54,203.70 293.70,207.30 296.54,210.90 292.00,210.24 290.30,214.50 288.60,210.24 284.06,210.90 286.90,207.30 284.06,203.70 288.60,204.36" fill="#ee82ee" shape-rendering="geometricPrecision"/><g shape-rendering="geometricPrecision" fill="#ee82ee"><rect x="297.40000000000003" y="202.3" width="3.4" height="18.69999999999999"/><polygon points="289.5,210.8 292.22,212.84 299.1,203.38000000000002 305.98,212.84 308.70000000000005,210.8 299.1,199.3"/></g><polygon points="546.40,126.30 548.10,130.56 552.64,129.90 549.80,133.50 552.64,137.10 548.10,136.44 546.40,140.70 544.70,136.44 540.16,137.10 543.00,133.50 540.16,129.90 544.70,130.56" fill="#d3d3d3" shape-rendering="geometricPrecision"/><g shape-rendering="geometricPrecision" fill="#d3d3d3"><rect x="553.6999999999999" y="154.8" width="3.4" height="17.399999999999977"/><polygon points="545.8,163.7 548.52,161.66 555.4,171.11999999999998 562.28,161.66 565.0,163.7 555.4,175.2"/></g><rect x="10.5" y="33.5" width="666" height="258" fill="none" stroke="#fff"/><rect x="10.5" y="293.5" width="666" height="128" fill="none" stroke="#fff"/><rect x="10.5" y="423.5" width="666" height="128" fill="none" stroke="#fff"/><polygon points="11,546 11,551 16,551" fill="#778899"/><rect x="677" y="57" width="3" height="1" fill="#fff"/><rect x="677" y="90" width="3" height="1" fill="#fff"/><rect x="677" y="123" width="3" height="1" fill="#fff"/><rect x="677" y="156" width="3" height="1" fill="#fff"/><rect x="677" y="189" width="3" height="1" fill="#fff"/><rect x="677" y="222" width="3" height="1" fill="#fff"/><rect x="677" y="255" width="3" height="1" fill="#fff"/><rect x="677" y="288" width="3" height="1" fill="#fff"/><rect x="677" y="295" width="2" height="1" fill="#fff"/><rect x="677" y="420" width="2" height="1" fill="#fff"/><rect x="677" y="425" width="2" height="1" fill="#fff"/><rect x="677" y="493" width="2" height="1" fill="#fff"/><rect x="677" y="550" width="2" height="1" fill="#fff"/><rect x="11" y="552" width="1" height="3" fill="#fff"/><rect x="75" y="552" width="1" height="3" fill="#fff"/><rect x="139" y="552" width="1" height="3" fill="#fff"/><rect x="203" y="552" width="1" height="3" fill="#fff"/><rect x="267" y="552" width="1" height="3" fill="#fff"/><rect x="331" y="552" width="1" height="3" fill="#fff"/><rect x="395" y="552" width="1" height="3" fill="#fff"/><rect x="459" y="552" width="1" height="3" fill="#fff"/><rect x="523" y="552" width="1" height="3" fill="#fff"/><rect x="587" y="552" width="1" height="3" fill="#fff"/><rect x="651" y="552" width="1" height="3" fill="#fff"/><g fill="#fff" font-family="Liberation Sans, sans-serif" text-rendering="geometricPrecision"><text transform="translate(682 61) scale(0.9170 1)" font-size="10">0.97230</text><text transform="translate(682 94) scale(0.9170 1)" font-size="10">0.97085</text><text transform="translate(682 127) scale(0.9170 1)" font-size="10">0.96935</text><text transform="translate(682 160) scale(0.9170 1)" font-size="10">0.96790</text><text transform="translate(682 193) scale(0.9170 1)" font-size="10">0.96640</text><text transform="translate(682 226) scale(0.9170 1)" font-size="10">0.96495</text><text transform="translate(682 259) scale(0.9170 1)" font-size="10">0.96350</text><text transform="translate(682 292) scale(0.9170 1)" font-size="10">0.96200</text><text transform="translate(679.7 304) scale(0.9260 1)" font-size="10">100.704</text><text transform="translate(679.5 358) scale(0.9300 1)" font-size="10">100</text><text transform="translate(680.3 418) scale(0.9080 1)" font-size="10">99.2169</text><text transform="translate(679.5 434) scale(0.9600 1)" font-size="10">120</text><text transform="translate(678.7 441) scale(0.9300 1)" font-size="10">100</text><text transform="translate(679.2 451) scale(0.8500 1)" font-size="10">80</text><text transform="translate(679.2 469) scale(0.8400 1)" font-size="10">50</text><text transform="translate(680 497) scale(0.9400 1)" font-size="10">0.00</text><text transform="translate(679 526) scale(0.9300 1)" font-size="10">-50</text><text transform="translate(679 543) scale(0.9300 1)" font-size="10">-80</text><text transform="translate(680 548) scale(0.8750 1)" font-size="10">-100</text><text transform="translate(25.2 45) scale(0.9870 1)" font-size="10">USDCHF,H1</text><text transform="translate(87.2 45) scale(0.9140 1)" font-size="10">0.90426 0.90472 0.90345 0.90463</text><text transform="translate(14.8 306) scale(0.9250 1)" font-size="10">Momentum(14) 99.7530</text><text transform="translate(14.8 436) scale(0.9280 1)" font-size="10">R1(26) -94.3 &#160;R1(52) -86.7</text><text transform="translate(10.4 564) scale(0.9410 1)" font-size="10">25 May 2020</text><text transform="translate(74.3 564) scale(0.9550 1)" font-size="10">26 May 06:00</text><text transform="translate(138.3 564) scale(0.9550 1)" font-size="10">26 May 14:00</text><text transform="translate(202.3 564) scale(0.9550 1)" font-size="10">26 May 22:00</text><text transform="translate(266.3 564) scale(0.9550 1)" font-size="10">27 May 06:00</text><text transform="translate(330.3 564) scale(0.9550 1)" font-size="10">27 May 14:00</text><text transform="translate(394.3 564) scale(0.9550 1)" font-size="10">27 May 22:00</text><text transform="translate(458.3 564) scale(0.9550 1)" font-size="10">28 May 06:00</text><text transform="translate(522.3 564) scale(0.9550 1)" font-size="10">28 May 14:00</text><text transform="translate(586.3 564) scale(0.9550 1)" font-size="10">28 May 22:00</text><text transform="translate(650.3 564) scale(0.9550 1)" font-size="10">29 May 06:00</text></g><polygon points="14,40 21,40 17.5,44" fill="#fff"/></svg>
</body></html>
